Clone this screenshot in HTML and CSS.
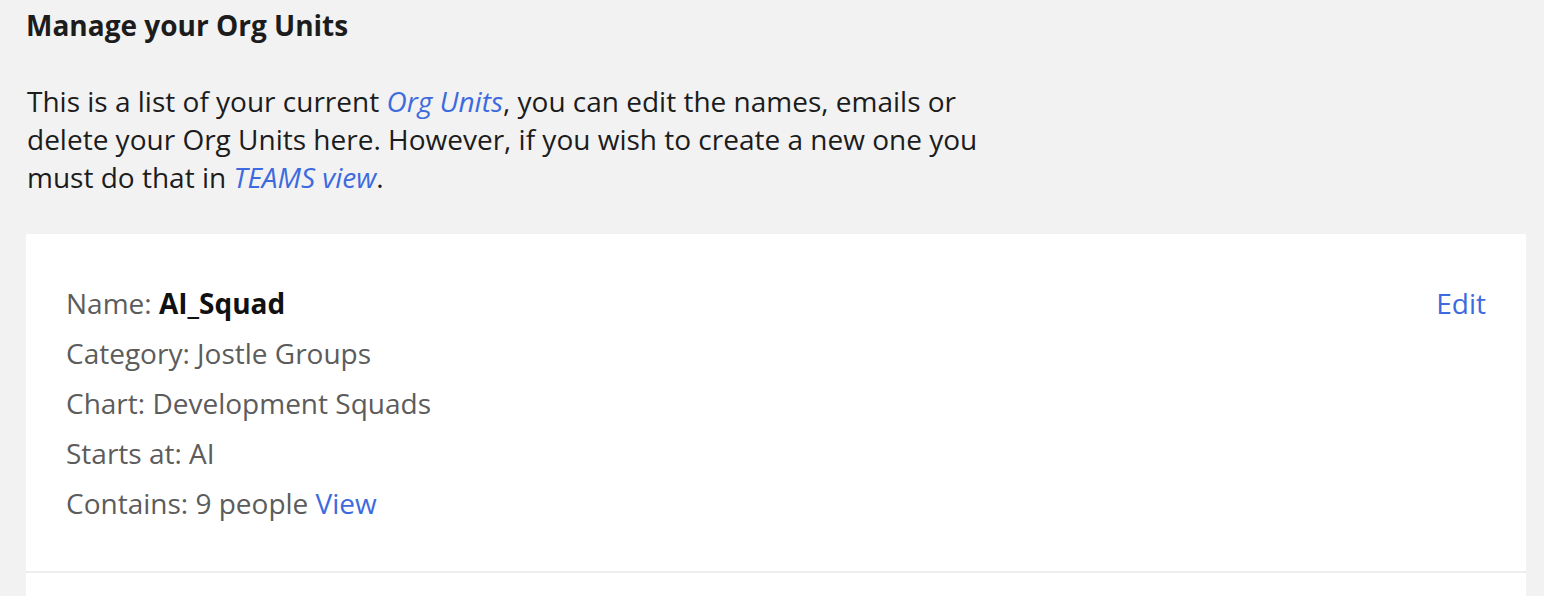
FILE: index.html
```html
<!DOCTYPE html>
<html lang="en">
<head>
<meta charset="utf-8">
<title>Manage your Org Units</title>
<link rel="stylesheet" href="styles.css">
</head>
<body>
<main class="page">
  <h1 class="title">Manage your Org Units</h1>
  <p class="intro">This is a list of your current <a class="link-italic" href="#">Org Units</a>, you can edit the names, emails or delete your Org Units here. However, if you wish to create a new one you must do that in <a class="link-italic" href="#">TEAMS view</a>.</p>
  <section class="card">
    <div class="unit">
      <ul class="details">
        <li>Name: <strong class="unit-name">AI_Squad</strong></li>
        <li>Category: Jostle Groups</li>
        <li>Chart: Development Squads</li>
        <li>Starts at: AI</li>
        <li>Contains: 9 people <a class="link" href="#">View</a></li>
      </ul>
      <a class="link edit" href="#">Edit</a>
    </div>
    <div class="unit unit-next"></div>
  </section>
</main>
</body>
</html>
```
FILE: styles.css
```css
html, body {
  margin: 0;
  padding: 0;
  background: #f2f2f2;
}
body {
  font-family: "Open Sans", "Noto Sans", sans-serif;
  color: #1c1c1c;
}
.page {
  padding: 0 18px 0 26px;
}
.title {
  margin: 0;
  padding-top: 8px;
  font-size: 28px;
  line-height: 34px;
  font-weight: 700;
  color: #1c1c1c;
}
.intro {
  margin: 40px 0 0 1px;
  width: 970px;
  font-size: 28px;
  line-height: 38px;
  color: #1c1c1c;
}
.link-italic {
  color: #3d6ade;
  font-style: italic;
  text-decoration: none;
}
.link {
  color: #3d6ade;
  text-decoration: none;
}
.card {
  margin-top: 38px;
  background: #ffffff;
}
.unit {
  display: flex;
  justify-content: space-between;
  align-items: flex-start;
  padding: 44px 40px 43px 40px;
  border-bottom: 2px solid #eeeeee;
}
.details {
  list-style: none;
  margin: 0;
  padding: 0;
  font-size: 28px;
  line-height: 50px;
  color: #5c5c5c;
}
.unit-name {
  color: #111111;
  font-weight: 700;
}
.edit {
  font-size: 28px;
  line-height: 50px;
}
.unit-next {
  border-bottom: none;
  padding: 0;
  height: 40px;
}
```
